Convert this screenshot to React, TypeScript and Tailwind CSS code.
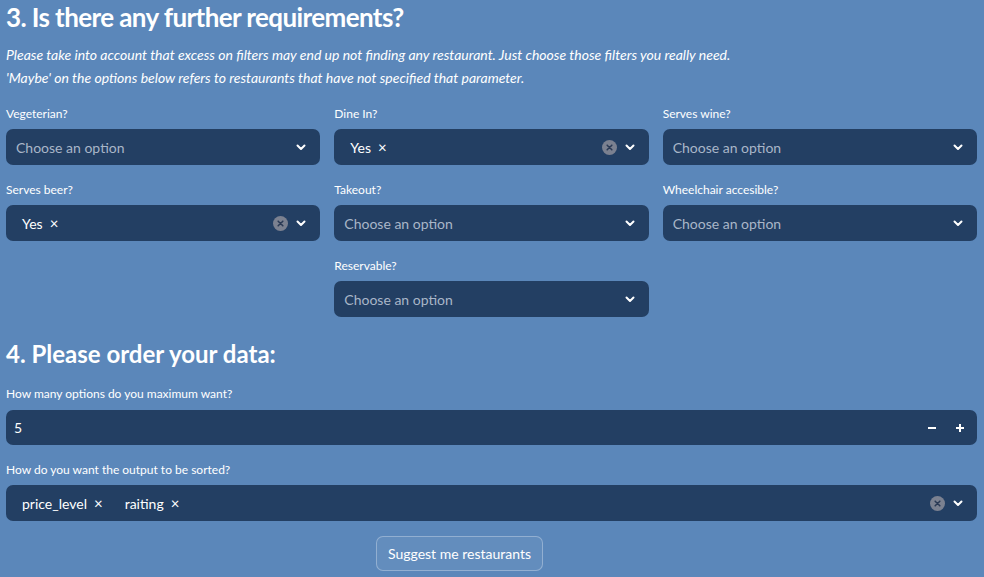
import React from "react";

const font = { fontFamily: "Lato, 'Open Sans', sans-serif" };

function Chevron() {
  return (
    <svg width="12" height="12" viewBox="0 0 12 12" fill="none">
      <path d="M2.5 4.5 L6 8 L9.5 4.5" stroke="white" strokeWidth="2" strokeLinecap="round" strokeLinejoin="round" />
    </svg>
  );
}

function ClearIcon() {
  return (
    <svg width="15" height="15" viewBox="0 0 16 16">
      <circle cx="8" cy="8" r="8" fill="#7b8190" />
      <path d="M5.5 5.5 L10.5 10.5 M10.5 5.5 L5.5 10.5" stroke="#2a3a55" strokeWidth="1.6" strokeLinecap="round" />
    </svg>
  );
}

function Tag({ label }: { label: string }) {
  return (
    <span className="flex items-center gap-[7px] pl-4 pr-[6px] text-[14px] text-white">
      <span>{label}</span>
      <span className="text-[15px] leading-none">×</span>
    </span>
  );
}

function Select({ label, tags }: { label: string; tags?: string[] }) {
  return (
    <div className="flex flex-col">
      <div className="text-[12px] text-white h-[15px] leading-[15px] mb-[8px]">{label}</div>
      <div className="h-[36px] rounded-[7px] bg-[#233f63] flex items-center pr-[13px]">
        {tags && tags.length ? (
          <div className="flex items-center flex-1">
            {tags.map((t) => (
              <Tag key={t} label={t} />
            ))}
          </div>
        ) : (
          <div className="flex-1 pl-[10px] text-[14px] text-[#a9b6c8]">Choose an option</div>
        )}
        {tags && tags.length ? (
          <span className="mr-[7px] flex items-center">
            <ClearIcon />
          </span>
        ) : null}
        <Chevron />
      </div>
    </div>
  );
}

export default function App() {
  return (
    <div className="w-[984px] h-[577px] bg-[#5b87ba] text-white overflow-hidden pl-[6px] pr-[7px]" style={font}>
      <h1 className="text-[26px] font-bold leading-[34px] tracking-[-0.6px] pt-0">3. Is there any further requirements?</h1>
      <div className="mt-[9px] italic text-[14px] leading-[23px]">
        <p>Please take into account that excess on filters may end up not finding any restaurant. Just choose those filters you really need.</p>
        <p>'Maybe' on the options below refers to restaurants that have not specified that parameter.</p>
      </div>
      <div className="mt-[17px] grid grid-cols-3 gap-x-[14px] gap-y-[17px]">
        <Select label="Vegeterian?" />
        <Select label="Dine In?" tags={["Yes"]} />
        <Select label="Serves wine?" />
        <Select label="Serves beer?" tags={["Yes"]} />
        <Select label="Takeout?" />
        <Select label="Wheelchair accesible?" />
        <div />
        <Select label="Reservable?" />
        <div />
      </div>
      <h2 className="mt-[22px] text-[24px] font-bold leading-[30px]">4. Please order your data:</h2>
      <div className="mt-[17px] text-[12px] leading-[15px] h-[15px]">How many options do you maximum want?</div>
      <div className="mt-[9px] h-[35px] rounded-[7px] bg-[#233f63] flex items-center pl-[8px] pr-[10px]">
        <span className="flex-1 text-[14px]">5</span>
        <span className="w-[14px] flex justify-center">
          <svg width="10" height="10" viewBox="0 0 10 10"><path d="M1 5 H9" stroke="white" strokeWidth="2" /></svg>
        </span>
        <span className="ml-[14px] w-[14px] flex justify-center">
          <svg width="10" height="10" viewBox="0 0 10 10"><path d="M1 5 H9 M5 1 V9" stroke="white" strokeWidth="2" /></svg>
        </span>
      </div>
      <div className="mt-[17px]">
        <Select label="How do you want the output to be sorted?" tags={["price_level", "raiting"]} />
      </div>
      <div className="mt-[15px] flex justify-center pr-[64px]">
        <button className="h-[35px] px-[11px] rounded-[7px] border border-white/30 bg-white/5 text-[14px] text-white">
          Suggest me restaurants
        </button>
      </div>
    </div>
  );
}
